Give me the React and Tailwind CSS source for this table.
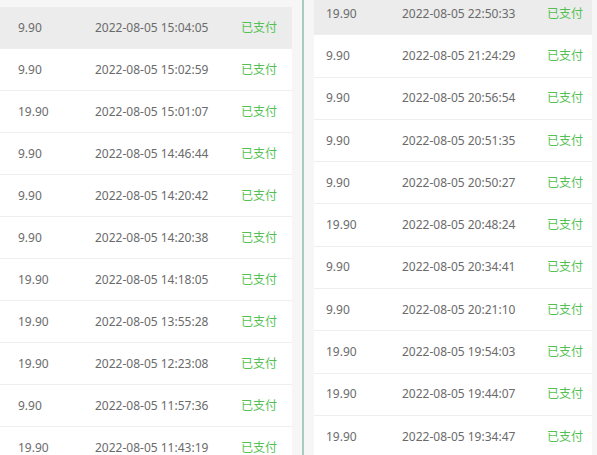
const leftRows = [
  ['9.90', '2022-08-05 15:04:05'],
  ['9.90', '2022-08-05 15:02:59'],
  ['19.90', '2022-08-05 15:01:07'],
  ['9.90', '2022-08-05 14:46:44'],
  ['9.90', '2022-08-05 14:20:42'],
  ['9.90', '2022-08-05 14:20:38'],
  ['19.90', '2022-08-05 14:18:05'],
  ['19.90', '2022-08-05 13:55:28'],
  ['19.90', '2022-08-05 12:23:08'],
  ['9.90', '2022-08-05 11:57:36'],
  ['19.90', '2022-08-05 11:43:19'],
];

const rightRows = [
  ['19.90', '2022-08-05 22:50:33'],
  ['9.90', '2022-08-05 21:24:29'],
  ['9.90', '2022-08-05 20:56:54'],
  ['9.90', '2022-08-05 20:51:35'],
  ['9.90', '2022-08-05 20:50:27'],
  ['19.90', '2022-08-05 20:48:24'],
  ['9.90', '2022-08-05 20:34:41'],
  ['9.90', '2022-08-05 20:21:10'],
  ['19.90', '2022-08-05 19:54:03'],
  ['19.90', '2022-08-05 19:44:07'],
  ['19.90', '2022-08-05 19:34:47'],
];

function OrderList({ rows, side }) {
  const isLeft = side === 'left';
  return (
    <div className={isLeft ? 'flex w-[292px] shrink-0 flex-col pt-[7px]' : 'mt-[-7px] flex w-[278px] shrink-0 flex-col'}>
      {rows.map(([price, time], i) => (
        <div
          key={time}
          className={`flex shrink-0 items-center border-b border-[#efefef] text-[12px] ${isLeft ? 'h-[42px] pl-[18px]' : 'h-[42.3px] pl-[12px]'} ${i === 0 ? 'bg-[#ececec]' : 'bg-white'}`}
        >
          <span className={`${isLeft ? 'w-[77px]' : 'w-[76px]'} text-[#6b6b6b]`}>{price}</span>
          <span className={`${isLeft ? 'w-[146px]' : 'w-[145px]'} text-[#6b6b6b]`}>{time}</span>
          <span className="text-[#52c152]">已支付</span>
        </div>
      ))}
    </div>
  );
}

export default function App() {
  return (
    <div className="flex h-[455px] w-[597px] overflow-hidden bg-[#f6f6f6] font-['Noto_Sans','Noto_Sans_CJK_SC',sans-serif]">
      <OrderList rows={leftRows} side="left" />
      <div className="w-[10px] shrink-0" />
      <div className="w-[2px] shrink-0 bg-[#a9cbc0]" />
      <div className="w-[10px] shrink-0" />
      <OrderList rows={rightRows} side="right" />
    </div>
  );
}
